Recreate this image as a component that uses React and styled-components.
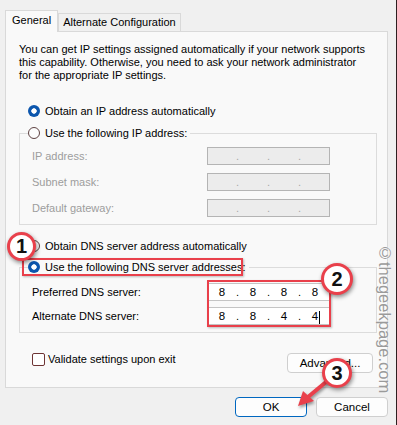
import React from 'react'
import styled, { createGlobalStyle } from 'styled-components'

const Global = createGlobalStyle`
  html, body { margin: 0; padding: 0; background: #f0f0f0; }
  body { font-family: "Liberation Sans", Arial, sans-serif; font-size: 11px; color: #000; }
`

const RED = '#e9404b'

function Radio({ checked }) {
  return <RadioDot checked={checked} />
}

function IpBox({ values, disabled, caret }) {
  const parts = values || ['', '', '', '']
  return (
    <IpField disabled={disabled}>
      {parts.map((v, i) => (
        <React.Fragment key={i}>
          {i > 0 && <IpDot disabled={disabled}>.</IpDot>}
          <Octet>
            {v}
            {caret && i === 3 && <Caret />}
          </Octet>
        </React.Fragment>
      ))}
    </IpField>
  )
}

function App() {
  return (
    <Screen>
      <Global />
      <TabStrip>
        <Tab active>General</Tab>
        <Tab>Alternate Configuration</Tab>
      </TabStrip>
      <Panel>
        <Intro>
          You can get IP settings assigned automatically if your network supports<br />
          this capability. Otherwise, you need to ask your network administrator<br />
          for the appropriate IP settings.
        </Intro>

        <RadioRow top={22}><Radio checked />Obtain an IP address automatically</RadioRow>
        <Group top={8} padTop={7}>
          <Legend><Radio />Use the following IP address:</Legend>
          <FieldGrid gap={8}>
            <FieldLabel disabled>IP address:</FieldLabel>
            <IpBox disabled />
            <FieldLabel disabled>Subnet mask:</FieldLabel>
            <IpBox disabled />
            <FieldLabel disabled>Default gateway:</FieldLabel>
            <IpBox disabled />
          </FieldGrid>
        </Group>

        <RadioRow top={14}><Radio />Obtain DNS server address automatically</RadioRow>
        <Group top={7} padTop={9}>
          <Legend><Radio checked />Use the following DNS server addresses:</Legend>
          <FieldGrid gap={6}>
            <FieldLabel>Preferred DNS server:</FieldLabel>
            <IpBox values={['8', '8', '8', '8']} />
            <FieldLabel>Alternate DNS server:</FieldLabel>
            <IpBox values={['8', '8', '4', '4']} caret />
          </FieldGrid>
        </Group>

        <Footer>
          <CheckRow><CheckBox />Validate settings upon exit</CheckRow>
          <Button wide>Advanced...</Button>
        </Footer>
      </Panel>

      <ButtonBar>
        <Button primary>OK</Button>
        <Button>Cancel</Button>
      </ButtonBar>

      <Highlight style={{ left: 22, top: 258, width: 221, height: 18 }} />
      <Highlight style={{ left: 207, top: 280, width: 124, height: 47 }} />

      <Watermark>©thegeekpage.com</Watermark>

      <Arrow width="50" height="40" viewBox="0 0 50 40">
        <line x1="38" y1="4" x2="14" y2="24" stroke={RED} strokeWidth="4" strokeLinecap="round" />
        <polygon points="4,33 9,18 20,28" fill={RED} />
      </Arrow>

      <Badge style={{ left: 7, top: 232 }} size={29}>1</Badge>
      <Badge style={{ left: 321, top: 263 }} size={32}>2</Badge>
      <Badge style={{ left: 322, top: 358 }} size={30}>3</Badge>
    </Screen>
  )
}

export default App

const Screen = styled.div`
  position: relative;
  width: 397px;
  height: 425px;
  padding-top: 10px;
  box-sizing: border-box;
  background: #f0f0f0;
  box-shadow: inset -1px 0 0 #2e1f20;
  overflow: hidden;
`

const TabStrip = styled.div`
  display: flex;
  align-items: flex-end;
  height: 21px;
  padding-left: 5px;
`

const Tab = styled.div`
  position: relative;
  z-index: ${p => (p.active ? 2 : 1)};
  box-sizing: border-box;
  height: ${p => (p.active ? '22px' : '18px')};
  margin-bottom: ${p => (p.active ? '-1px' : '0')};
  padding: ${p => (p.active ? '3px 6px 0' : '2px 4px 0')};
  border: 1px solid #d9d9d9;
  border-bottom: none;
  background: ${p => (p.active ? '#f9f9f9' : '#f0f0f0')};
  line-height: 13px;
  font-size: 11px;
  white-space: nowrap;
`

const Panel = styled.div`
  box-sizing: border-box;
  margin-left: 5px;
  width: 383px;
  height: 357px;
  padding: 11px 10px 0 13px;
  border: 1px solid #d9d9d9;
  background: #f9f9f9;
`

const Intro = styled.p`
  margin: 0;
  line-height: 13px;
  white-space: nowrap;
  font-size: 11px;
`

const RadioRow = styled.div`
  display: flex;
  align-items: center;
  gap: 5px;
  height: 14px;
  margin-top: ${p => p.top}px;
  padding-left: 9px;
  white-space: nowrap;
`

const RadioDot = styled.span`
  flex: none;
  box-sizing: border-box;
  width: 12px;
  height: 12px;
  border-radius: 50%;
  border: ${p => (p.checked ? 'none' : '1px solid #5e4242')};
  background: ${p =>
    p.checked
      ? 'radial-gradient(circle, #fff 0 2.4px, #0c56ad 3px)'
      : '#fcfcfc'};
`

const Group = styled.fieldset`
  margin: ${p => p.top}px 0 0;
  padding: ${p => p.padTop}px 12px 7px;
  border: 1px solid #dcdcdc;
  min-width: 0;
`

const Legend = styled.legend`
  display: flex;
  align-items: center;
  gap: 5px;
  height: 14px;
  margin-left: -4px;
  padding: 0 3px 0 0;
  white-space: nowrap;
  font-size: 11px;
`

const FieldGrid = styled.div`
  display: grid;
  grid-template-columns: 175px 123px;
  row-gap: ${p => p.gap}px;
  align-items: center;
`

const FieldLabel = styled.span`
  color: ${p => (p.disabled ? '#9d9d9d' : '#000')};
  white-space: nowrap;
`

const IpField = styled.div`
  box-sizing: border-box;
  display: flex;
  align-items: center;
  height: 18px;
  padding-left: 2px;
  border: 1px solid ${p => (p.disabled ? '#b4b4b4' : '#c4c4c4')};
  background: ${p => (p.disabled ? '#ececec' : '#fff')};
`

const Octet = styled.span`
  position: relative;
  width: 24px;
  text-align: center;
  font-size: 11.5px;
`

const IpDot = styled.span`
  width: 7px;
  text-align: center;
  color: ${p => (p.disabled ? '#a8a8a8' : '#000')};
`

const Caret = styled.span`
  position: absolute;
  top: 1px;
  width: 1px;
  height: 13px;
  margin-left: 1px;
  background: #000;
`

const Footer = styled.div`
  display: flex;
  justify-content: space-between;
  align-items: flex-start;
  margin-top: 20px;
  padding-right: 4px;
`

const CheckRow = styled.div`
  display: flex;
  align-items: center;
  gap: 3px;
  height: 13px;
  padding-left: 13px;
  line-height: 13px;
`

const CheckBox = styled.span`
  box-sizing: border-box;
  width: 13px;
  height: 13px;
  border: 1px solid #6e3434;
  border-radius: 2px;
  background: #fff;
`

const Button = styled.button`
  box-sizing: border-box;
  width: ${p => (p.wide ? '86px' : '72px')};
  height: 20px;
  padding: 0;
  border: 1px solid ${p => (p.primary ? '#0067c0' : '#cfcfcf')};
  border-radius: 4px;
  background: #fdfdfd;
  font-family: "Liberation Sans", Arial, sans-serif;
  font-size: 11.5px;
  color: #000;
`

const ButtonBar = styled.div`
  display: flex;
  justify-content: flex-end;
  gap: 9px;
  margin-top: 9px;
  padding-right: 9px;
`

const Highlight = styled.div`
  position: absolute;
  box-sizing: border-box;
  border: 2px solid ${RED};
  box-shadow: 1px 1px 2px rgba(0, 0, 0, 0.25);
`

const Badge = styled.div`
  position: absolute;
  box-sizing: border-box;
  width: ${p => p.size}px;
  height: ${p => p.size}px;
  display: flex;
  align-items: center;
  justify-content: center;
  border: 3px solid ${RED};
  border-radius: 50%;
  background: #fff;
  box-shadow: 1px 2px 4px rgba(0, 0, 0, 0.45);
  font-family: "Liberation Sans", Arial, sans-serif;
  font-weight: bold;
  font-size: 20px;
  color: #111;
`

const Arrow = styled.svg`
  position: absolute;
  left: 294px;
  top: 373px;
  overflow: visible;
  filter: drop-shadow(1px 2px 1.5px rgba(0, 0, 0, 0.4));
`

const Watermark = styled.div`
  position: absolute;
  left: 376px;
  top: 244px;
  writing-mode: vertical-rl;
  font-family: "Liberation Sans", Arial, sans-serif;
  font-size: 16.5px;
  line-height: 17px;
  color: #9a9a9a;
  text-shadow: 0 0 2px #fff;
  white-space: nowrap;
`
